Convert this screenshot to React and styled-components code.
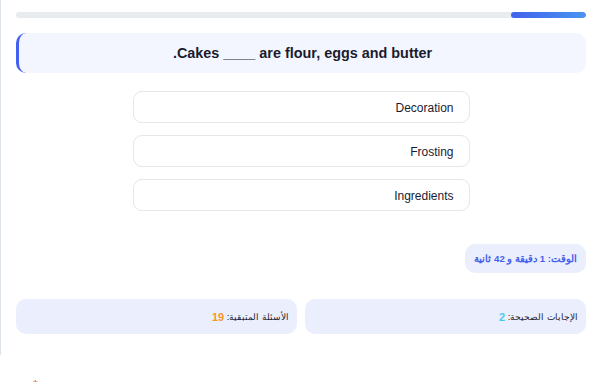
import React from 'react';
import styled, { createGlobalStyle } from 'styled-components';

const GlobalStyle = createGlobalStyle`
  html, body {
    margin: 0;
    padding: 0;
    background: #ffffff;
    font-family: "Liberation Sans", Arial, sans-serif;
  }
`;

const Page = styled.div`
  direction: rtl;
  display: flex;
  flex-direction: column;
  padding: 12px 12px 21px 15px;
  border-left: 1px solid #dfe3ea;
`;

const Track = styled.div`
  height: 6px;
  border-radius: 3px;
  background: #e9ecef;
  overflow: hidden;
  display: flex;
`;

const Fill = styled.div`
  height: 100%;
  border-radius: 3px;
  background: linear-gradient(to left, #4895ef, #4361ee);
`;

const Question = styled.div`
  margin-top: 15px;
  height: 40px;
  display: flex;
  align-items: center;
  justify-content: center;
  background: #f3f6fe;
  border-left: 3px solid #4361ee;
  border-radius: 10px;
  font-size: 14.4px;
  font-weight: bold;
  color: #1b1b2f;
`;

const Options = styled.div`
  margin: 18px auto 0;
  width: 337px;
  display: flex;
  flex-direction: column;
  gap: 12px;
`;

const Option = styled.button`
  direction: rtl;
  height: 32px;
  padding: 1px 15px 0;
  text-align: right;
  background: #ffffff;
  border: 1px solid #e6e6e6;
  border-radius: 9px;
  font-family: inherit;
  font-size: 12px;
  color: #1b1b2f;
  cursor: pointer;
`;

const TimerRow = styled.div`
  margin-top: 33px;
  display: flex;
`;

const Timer = styled.div`
  height: 29px;
  padding: 0 9px;
  display: flex;
  align-items: center;
  background: #eaeefd;
  border-radius: 10px;
  font-size: 9.6px;
  font-weight: bold;
  color: #4361ee;
`;

const Stats = styled.div`
  margin-top: 26px;
  display: grid;
  grid-template-columns: 1fr 1fr;
  gap: 8px;
`;

const Stat = styled.div`
  height: 35px;
  padding: 0 8px;
  display: flex;
  align-items: center;
  background: #ebeefc;
  border-radius: 10px;
  font-size: 9.4px;
  color: #1b1b2f;
`;

const Value = styled.b`
  font-size: 11px;
  color: ${(p) => p.color};
`;

const Footer = styled.div`
  margin-top: 24px;
  padding-left: 33px;
  font-size: 12px;
  line-height: 12px;
  color: #e63946;
`;

export default function App() {
  const progress = 13.2;
  return (
    <>
      <GlobalStyle />
      <Page>
        <Track>
          <Fill style={{ width: `${progress}%` }} />
        </Track>
        <Question>Cakes ____ are flour, eggs and butter.</Question>
        <Options>
          <Option type="button">Decoration</Option>
          <Option type="button">Frosting</Option>
          <Option type="button">Ingredients</Option>
        </Options>
        <TimerRow>
          <Timer>الوقت: 1 دقيقة و 42 ثانية</Timer>
        </TimerRow>
        <Stats>
          <Stat>الإجابات الصحيحة:&nbsp;<Value color="#4cc9f0">2</Value></Stat>
          <Stat>الأسئلة المتبقية:&nbsp;<Value color="#f8961e">19</Value></Stat>
        </Stats>
      </Page>
      <Footer>*</Footer>
    </>
  );
}
